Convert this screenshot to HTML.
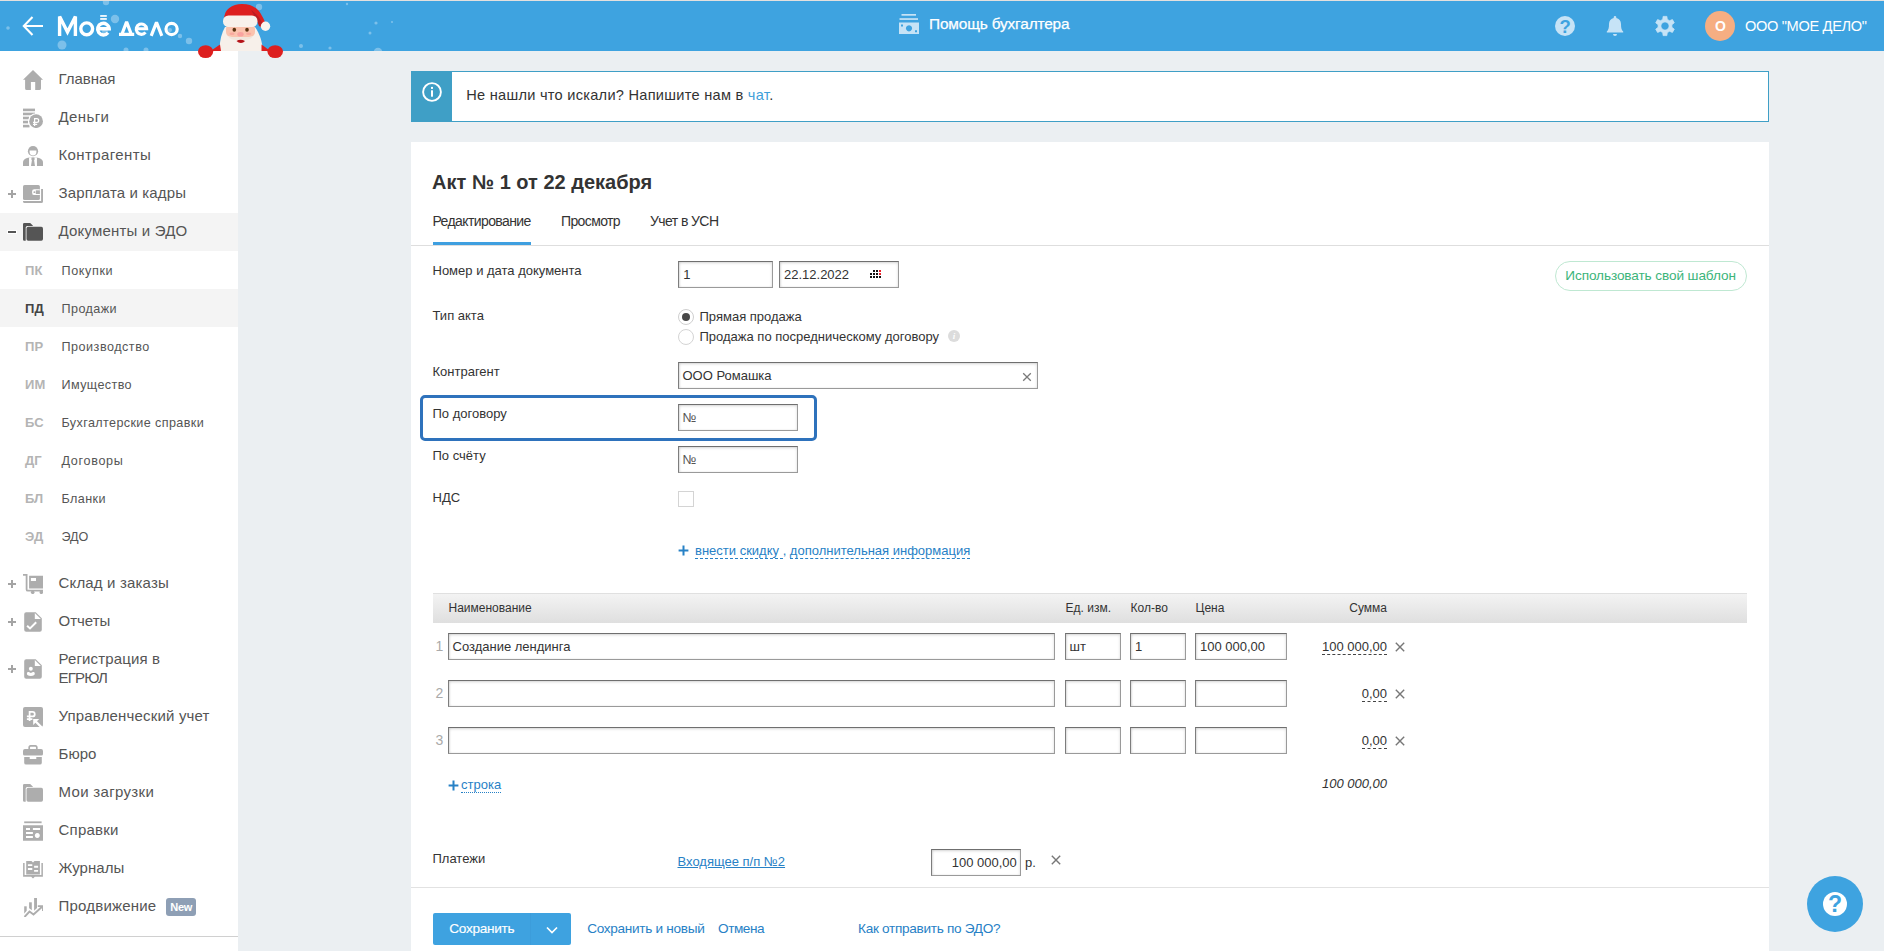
<!DOCTYPE html>
<html lang="ru">
<head>
<meta charset="utf-8">
<title>Акт № 1 от 22 декабря</title>
<style>
*{box-sizing:border-box;margin:0;padding:0}
html,body{width:1884px;height:951px;overflow:hidden}
body{position:relative;background:#ebeff2;font-family:"Liberation Sans",sans-serif;color:#333;font-size:13px}
.abs{position:absolute}
#hdr{z-index:5;position:absolute;left:0;top:0;width:1884px;height:51px;background:#3ea3e0;border-top:1px solid #e3e0de}
#hdr .t{position:absolute;color:#fff;font-size:15px;white-space:nowrap}
#side{position:absolute;left:0;top:0;width:238px;height:951px;background:#fff}
.tx{position:absolute;white-space:nowrap}
.band{position:absolute;left:0;width:238px;background:#f4f4f4}
.pm{position:absolute;left:7.9px;width:8.2px;height:8.2px}
.pm:before{content:"";position:absolute;left:0;top:3.3px;width:8.2px;height:1.6px;background:#a4a4a4}
.pm.minus:before{background:#555;height:2.2px;top:3px;box-shadow:0 0 0 1px #fff}
.pm.plus:after{content:"";position:absolute;left:3.3px;top:0;width:1.6px;height:8.2px;background:#a4a4a4}
.ic{position:absolute;left:23px}
#info{position:absolute;left:411px;top:71px;width:1358px;height:51px;background:#fff;border:1px solid #3f9fc6}
#info .ib{position:absolute;left:-1px;top:-1px;width:41px;height:51px;background:#3f9fc6}
#card{position:absolute;left:411px;top:142px;width:1358px;height:809px;background:#fff}
.inp{position:absolute;height:27px;background:#fff;border:1px solid #9a9a9a;border-top-color:#6f6f6f;border-left-color:#7d7d7d;box-shadow:inset 0 1px 3px rgba(0,0,0,.16),inset 1px 0 2px rgba(0,0,0,.07)}
.lnk{color:#2b7fc3}
</style>
</head>
<body>
<div id="side">
<div class="band" style="top:213px;height:38px"></div>
<div class="band" style="top:289px;height:38px"></div>
<svg class="ic" style="top:70px" width="20" height="20" viewBox="0 0 20 20" fill="#adadad"><path d="M10 0 L20 9.7 H18 V18.4 a1.6 1.6 0 0 1 -1.6 1.6 H12.2 V12 H7.9 V20 H3.7 a1.6 1.6 0 0 1 -1.6 -1.6 V9.7 H0 Z"/></svg>
<svg class="ic" style="top:107.5px" width="20" height="20" viewBox="0 0 20 20" fill="#adadad"><rect x="0" y="0.6" width="12" height="2.6"/><rect x="0" y="4.65" width="12" height="2.6"/><rect x="0" y="8.7" width="6" height="2.6"/><rect x="0" y="12.75" width="5" height="2.6"/><rect x="0" y="16.8" width="6.5" height="2.6"/>
<circle cx="13.1" cy="13.2" r="8" fill="#fff"/><circle cx="13.1" cy="13.2" r="6.85"/>
<path d="M11.6 18 V10.6 H13.8 a1.9 1.9 0 0 1 0 3.8 H10 M10 16.4 H14.2" fill="none" stroke="#fff" stroke-width="1.25"/></svg>
<svg class="ic" style="top:146px" width="20" height="20" viewBox="0 0 20 20" fill="#adadad"><circle cx="10" cy="5.2" r="5.1"/><path d="M6.6 4.6 H13.4 V6 a3.4 3.4 0 0 1 -6.8 0 Z" fill="#fff"/>
<path d="M0 20 V16.5 C0 13.5 3 12 6.5 11.5 H13.5 C17 12 20 13.5 20 16.5 V20 Z"/>
<path d="M6.2 11.4 L6.2 20 H13.8 V11.4 Z" fill="#fff"/>
<path d="M7.6 12.6 V20 H6.200 V12 Z M12.400 12.600 V20 H13.800 V12 Z" fill="#fff"/>
<path d="M7.700 13.500 V20 H6.100 Z" fill="none"/>
<path d="M8.600 11.500 H11.400 L11.700 13.300 L11.100 14.300 L12 20 H8 L8.900 14.300 L8.300 13.300 Z"/>
<path d="M0 20 V16.500 C0 13.500 3 12 6.200 11.400 V20 Z M20 20 V16.500 C20 13.500 17 12 13.800 11.400 V20 Z" fill="none"/></svg>
<svg class="ic" style="top:184px" width="20" height="20" viewBox="0 0 20 20" fill="#adadad"><rect x="0" y="1" width="16.900" height="15" rx="1.600"/>
<rect x="9.100" y="5.200" width="9" height="5.900" rx="2.200" fill="#fff"/>
<rect x="12.800" y="6.300" width="4.100" height="3.700"/>
<circle cx="11.400" cy="8.150" r="0.950"/>
<path d="M18.100 5 H20 V17.400 a1.600 1.600 0 0 1 -1.600 1.600 H1.600 a1.600 1.600 0 0 1 -1.600 -1.600 V16.900 H18.100 Z"/></svg>
<svg class="ic" style="top:222px" width="20" height="20" viewBox="0 0 20 20" fill="#555"><path d="M0 2.200 a1.200 1.200 0 0 1 1.200 -1.200 H7.200 L9.800 3.600 V3.900 H4.300 a1.600 1.600 0 0 0 -1.600 1.600 V18.800 H1.200 a1.200 1.200 0 0 1 -1.200 -1.200 Z"/>
<rect x="3.500" y="4.700" width="16.500" height="14.100" rx="1.700"/></svg>
<svg class="ic" style="top:574px" width="20" height="20" viewBox="0 0 20 20" fill="#adadad"><path d="M0 0.900 H3.600 V15.400 a1.300 1.300 0 0 0 1.300 1.300 H20" fill="none" stroke="#adadad" stroke-width="1.800"/><path d="M6.100 1.800 H20 V14.500 H6.100 Z M7.900 3.900 V7 H13 V3.900 Z" fill-rule="evenodd"/>
<circle cx="9.700" cy="18.300" r="1.800"/><circle cx="18.300" cy="18.300" r="1.800"/></svg>
<svg class="ic" style="top:612px" width="20" height="20" viewBox="0 0 20 20" fill="#adadad"><path d="M1.200 2.200 a2 2 0 0 1 2 -2 H12.700 L18.800 6.300 V17.800 a2 2 0 0 1 -2 2 H3.200 a2 2 0 0 1 -2 -2 Z"/><path d="M11.800 1.100 V7.100 H17.900 Z" fill="#fff"/><path d="M4.100 13.700 L7 16.400 L13.200 10.200" fill="none" stroke="#fff" stroke-width="2"/></svg>
<svg class="ic" style="top:659px" width="20" height="20" viewBox="0 0 20 20" fill="#adadad"><path d="M1.200 2.200 a2 2 0 0 1 2 -2 H12.700 L18.800 6.300 V17.800 a2 2 0 0 1 -2 2 H3.200 a2 2 0 0 1 -2 -2 Z"/><path d="M11.800 1.100 V7.100 H17.900 Z" fill="#fff"/><circle cx="7.850" cy="9.800" r="1.950" fill="#fff"/><path d="M3.900 14.300 C4.200 13 5.200 12.600 5.800 13.100 C7 14.200 8.700 14.200 9.900 13.100 C10.500 12.600 11.500 13 11.800 14.300 C12 16.200 10.500 17 7.850 17 C5.200 17 3.700 16.200 3.900 14.300 Z" fill="#fff"/></svg>
<svg class="ic" style="top:707px" width="20" height="20" viewBox="0 0 20 20" fill="#adadad"><rect x="0" y="0" width="20" height="20" rx="2"/>
<path d="M6.600 13.900 V4.850 H9.450 a2.300 2.300 0 0 1 0 4.600 H3.900 M3.900 12.200 H9.400" fill="none" stroke="#fff" stroke-width="1.750"/>
<path d="M10.200 12 H16.200 L10.200 18 Z" fill="#fff"/><path d="M12.500 14.300 L21 22.800" stroke="#fff" stroke-width="2.300"/></svg>
<svg class="ic" style="top:745px" width="20" height="20" viewBox="0 0 20 20" fill="#adadad"><path d="M6.200 4.300 V2.200 a1.300 1.300 0 0 1 1.300 -1.300 H12.500 a1.300 1.300 0 0 1 1.300 1.300 V4.300" fill="none" stroke="#adadad" stroke-width="1.700"/>
<path d="M0 6 a1.900 1.900 0 0 1 1.900 -1.900 H18.100 a1.900 1.900 0 0 1 1.900 1.900 V9 a1.500 1.500 0 0 1 -1.500 1.500 H1.500 a1.500 1.500 0 0 1 -1.500 -1.500 Z"/>
<path d="M1.200 11.900 H6.700 V14.100 H13.300 V11.900 H18.800 V17.700 a1.900 1.900 0 0 1 -1.900 1.900 H3.100 a1.900 1.900 0 0 1 -1.900 -1.900 Z"/></svg>
<svg class="ic" style="top:783px" width="20" height="20" viewBox="0 0 20 20" fill="#adadad"><path d="M0 2.200 a1.200 1.200 0 0 1 1.200 -1.200 H7.200 L9.800 3.600 V3.900 H4.300 a1.600 1.600 0 0 0 -1.600 1.600 V18.800 H1.200 a1.200 1.200 0 0 1 -1.200 -1.200 Z"/>
<rect x="3.500" y="4.700" width="16.500" height="14.100" rx="1.700"/></svg>
<svg class="ic" style="top:821px" width="20" height="20" viewBox="0 0 20 20" fill="#adadad"><rect x="1.200" y="0.400" width="17.400" height="1.800"/><path d="M0 4.200 H20 V19.700 H0 Z M3 7 V9 H7 V7 Z M9.900 7 V9 H17.100 V7 Z M3 11.100 V13.100 H9.900 V11.100 Z M3 15 V16.900 H9.900 V15 Z M14.300 12.100 a2.500 2.500 0 1 0 0.010 0 Z" fill-rule="evenodd"/></svg>
<svg class="ic" style="top:859px" width="20" height="20" viewBox="0 0 20 20" fill="#adadad"><path d="M0.100 4 H1.600 V16.100 H18.400 V4 H19.900 V17.800 H11.800 L10 19.600 L8.200 17.800 H0.100 Z"/>
<path d="M3.200 2 H8.500 L10 3.400 L11.500 2 H16.900 V15.500 H3.200 Z"/>
<path d="M4.900 6.100 H9.300 M4.900 9.950 H9.300 M11.100 7.750 H15.100 M11.100 11.900 H15.100" stroke="#fff" stroke-width="1.900"/></svg>
<svg class="ic" style="top:897px" width="20" height="20" viewBox="0 0 20 20" fill="#adadad"><rect x="1.200" y="9.300" width="2.500" height="8"/><rect x="6.100" y="5.300" width="2.700" height="9"/><rect x="11.100" y="1" width="2.900" height="13"/>
<path d="M-1 22.500 L6.500 14.600 L10.500 17.500 L18.800 10" fill="none" stroke="#fff" stroke-width="5"/>
<path d="M1.500 20 L6.500 14.600 L10.500 17.500 L18.800 10" fill="none" stroke="#adadad" stroke-width="1.900"/><path d="M14.800 9.100 H20 V14" fill="none" stroke="#adadad" stroke-width="1.900"/></svg>
<div class="tx" id="t1" style="top:70.00px;font-size:15px;line-height:18px;left:58.5px;color:#555;letter-spacing:-0.049px;">Главная</div>
<div class="tx" id="t2" style="top:108.00px;font-size:15px;line-height:18px;left:58.5px;color:#555;letter-spacing:0.409px;">Деньги</div>
<div class="tx" id="t3" style="top:146.00px;font-size:15px;line-height:18px;left:58.5px;color:#555;letter-spacing:0.386px;">Контрагенты</div>
<div class="tx" id="t4" style="top:184.00px;font-size:15px;line-height:18px;left:58.5px;color:#555;letter-spacing:0.132px;">Зарплата и кадры</div>
<div class="tx" id="t5" style="top:222.00px;font-size:15px;line-height:18px;left:58.5px;color:#555;letter-spacing:0.182px;">Документы и ЭДО</div>
<div class="tx" id="t6" style="top:574.00px;font-size:15px;line-height:18px;left:58.5px;color:#555;letter-spacing:0.171px;">Склад и заказы</div>
<div class="tx" id="t7" style="top:612.00px;font-size:15px;line-height:18px;left:58.5px;color:#555;letter-spacing:-0.012px;">Отчеты</div>
<div class="tx" id="t8" style="top:650.00px;font-size:15px;line-height:18px;left:58.5px;color:#555;letter-spacing:0.139px;">Регистрация в</div>
<div class="tx" id="t9" style="top:668.80px;font-size:15px;line-height:18px;left:58.5px;color:#555;letter-spacing:-0.792px;">ЕГРЮЛ</div>
<div class="tx" id="t10" style="top:707.00px;font-size:15px;line-height:18px;left:58.5px;color:#555;letter-spacing:0.175px;">Управленческий учет</div>
<div class="tx" id="t11" style="top:745.00px;font-size:15px;line-height:18px;left:58.5px;color:#555;letter-spacing:0.040px;">Бюро</div>
<div class="tx" id="t12" style="top:783.00px;font-size:15px;line-height:18px;left:58.5px;color:#555;letter-spacing:0.323px;">Мои загрузки</div>
<div class="tx" id="t13" style="top:821.00px;font-size:15px;line-height:18px;left:58.5px;color:#555;letter-spacing:0.240px;">Справки</div>
<div class="tx" id="t14" style="top:859.00px;font-size:15px;line-height:18px;left:58.5px;color:#555;letter-spacing:0.031px;">Журналы</div>
<div class="tx" id="t15" style="top:897.00px;font-size:15px;line-height:18px;left:58.5px;color:#555;letter-spacing:0.207px;">Продвижение</div>
<div class="tx" id="t16" style="top:262.50px;font-size:13px;line-height:16px;left:25.1px;color:#b4b4b4;font-weight:bold;">ПК</div>
<div class="tx" id="t17" style="top:262.63px;font-size:12.6px;line-height:16px;left:61.5px;color:#555;letter-spacing:0.621px;">Покупки</div>
<div class="tx" id="t18" style="top:300.50px;font-size:13px;line-height:16px;left:25.1px;color:#444;font-weight:bold;">ПД</div>
<div class="tx" id="t19" style="top:300.63px;font-size:12.6px;line-height:16px;left:61.5px;color:#555;letter-spacing:0.415px;">Продажи</div>
<div class="tx" id="t20" style="top:338.50px;font-size:13px;line-height:16px;left:25.1px;color:#b4b4b4;font-weight:bold;">ПР</div>
<div class="tx" id="t21" style="top:338.63px;font-size:12.6px;line-height:16px;left:61.5px;color:#555;letter-spacing:0.507px;">Производство</div>
<div class="tx" id="t22" style="top:376.50px;font-size:13px;line-height:16px;left:25.1px;color:#b4b4b4;font-weight:bold;">ИМ</div>
<div class="tx" id="t23" style="top:376.63px;font-size:12.6px;line-height:16px;left:61.5px;color:#555;letter-spacing:0.388px;">Имущество</div>
<div class="tx" id="t24" style="top:414.50px;font-size:13px;line-height:16px;left:25.1px;color:#b4b4b4;font-weight:bold;">БС</div>
<div class="tx" id="t25" style="top:414.63px;font-size:12.6px;line-height:16px;left:61.5px;color:#555;letter-spacing:0.380px;">Бухгалтерские справки</div>
<div class="tx" id="t26" style="top:452.50px;font-size:13px;line-height:16px;left:25.1px;color:#b4b4b4;font-weight:bold;">ДГ</div>
<div class="tx" id="t27" style="top:452.63px;font-size:12.6px;line-height:16px;left:61.5px;color:#555;letter-spacing:0.670px;">Договоры</div>
<div class="tx" id="t28" style="top:490.50px;font-size:13px;line-height:16px;left:25.1px;color:#b4b4b4;font-weight:bold;">БЛ</div>
<div class="tx" id="t29" style="top:490.63px;font-size:12.6px;line-height:16px;left:61.5px;color:#555;letter-spacing:0.403px;">Бланки</div>
<div class="tx" id="t30" style="top:528.50px;font-size:13px;line-height:16px;left:25.1px;color:#b4b4b4;font-weight:bold;">ЭД</div>
<div class="tx" id="t31" style="top:528.63px;font-size:12.6px;line-height:16px;left:61.5px;color:#555;letter-spacing:-0.134px;">ЭДО</div>
<div class="pm plus" style="top:189.9px"></div>
<div class="pm plus" style="top:579.9px"></div>
<div class="pm plus" style="top:617.9px"></div>
<div class="pm plus" style="top:664.9px"></div>
<div class="pm minus" style="top:227.9px"></div>
<div class="abs" style="left:166px;top:898px;width:30px;height:18px;border-radius:3px;background:#8e9fb5"></div>
<div class="tx" id="t32" style="top:900.49px;font-size:11px;line-height:14px;left:170.3px;color:#fff;font-weight:bold;letter-spacing:-0.363px;">New</div>
<div class="abs" style="left:0;top:936px;width:238px;height:1px;background:#d0d0d0"></div>
</div>
<div id="hdr">
<svg class="abs" style="left:0;top:-1px;overflow:visible" width="1884" height="62" viewBox="0 0 1884 62">
<defs><clipPath id="hc"><rect x="0" y="1" width="1884" height="50"/></clipPath></defs>
<g fill="#fff" fill-opacity=".32" clip-path="url(#hc)">
<circle cx="115" cy="19" r="4.2"/><circle cx="62" cy="45" r="4.5"/><circle cx="189" cy="41" r="3.2"/><circle cx="180" cy="36" r="2.2"/>
<circle cx="106" cy="2" r="3.2"/><circle cx="259" cy="7" r="3.2"/><circle cx="301" cy="46" r="2"/><circle cx="330" cy="48" r="1.6"/>
<circle cx="370" cy="33" r="1.5"/><circle cx="376" cy="23" r="1.6"/><circle cx="392" cy="22" r="1.1"/><circle cx="378" cy="52" r="4.300"/>
<circle cx="8" cy="28" r="1.8"/><circle cx="347" cy="4" r="1.2"/><circle cx="170" cy="30" r="2"/><circle cx="105" cy="32" r="3"/><circle cx="126" cy="50" r="2.5"/><circle cx="146" cy="50" r="2.5"/>
</g>
<!-- back arrow -->
<g fill="none" stroke="#fff" stroke-width="2.1" stroke-linecap="butt" stroke-linejoin="miter">
<path d="M24 26 H43 M32.5 17 L23.8 26 L32.5 35"/>
</g>
<!-- logo -->
<g fill="none" stroke="#fff" stroke-width="3.4" stroke-linejoin="miter">
<path d="M59.600 36 V16.500 L67.500 32 L75.400 16.500 V36"/>
<circle cx="86.700" cy="28.800" r="5.900"/>
<path d="M98 28.800 H109.200 A5.800 5.800 0 1 0 108 32.700"/>
<path d="M119 34.300 H134.200 M121.900 34.300 L126.600 21.900 L131.300 34.300" stroke-width="3.200" stroke-linejoin="bevel"/>
<path d="M137 28.700 H146.600 A5.200 5.200 0 1 0 145.500 32.400" stroke-width="3.100"/>
<path d="M151.200 35.900 L156.500 22.300 L161.800 35.900" stroke-width="3.200" stroke-linejoin="bevel"/>
<circle cx="171.600" cy="29" r="5.600" stroke-width="3.200"/>
</g>
<g fill="#fff"><rect x="100.200" y="15.100" width="6.600" height="1.700"/><rect x="100.200" y="18.100" width="6.600" height="1.700"/></g>
<!-- santa -->
<g>
<path d="M224 20 C224 9 232 4 242 4 C252 4 258 8 262 16 C265 21 266 25 266 27 L260 27 C258 22 256 19 254 17 Z" fill="#dd1f1f"/>
<path d="M251 10 C256 13 262 20 264 27 L259 26 C257 20 254 15 251 10 Z" fill="#b81c22"/>
<path d="M220 51 C219 44 221 34 225 27 L255 27 C260 34 263 44 262.500 51 Z" fill="#f7f0ea"/>
<rect x="226" y="24" width="29" height="13" rx="5" fill="#fbc3ae"/>
<rect x="223" y="15.5" width="34.5" height="11.5" rx="5.5" fill="#f8f1eb"/>
<circle cx="265.5" cy="26.3" r="4.7" fill="#faf3ec"/>
<ellipse cx="234.3" cy="29.8" rx="1.8" ry="2" fill="#5a3210"/><ellipse cx="247" cy="29.8" rx="1.8" ry="2" fill="#5a3210"/>
<ellipse cx="240.5" cy="34.3" rx="3.2" ry="2.3" fill="#f9a3a0"/>
<ellipse cx="232" cy="33.8" rx="2.6" ry="1.3" fill="#f9aa9e"/><ellipse cx="248.7" cy="33.8" rx="2.6" ry="1.3" fill="#f9aa9e"/>
<path d="M228 36 C233 38 238 36 240.5 37.5 C243 36 248 38 253 36 C250 41 244 40 240.5 39.5 C237 40 231 41 228 36 Z" fill="#f1e6dc"/>
<path d="M236.5 41 C239 39.3 242 39.3 245 41 C243 43.6 239 43.6 236.5 41 Z" fill="#b51217"/>
<path d="M212 50 L220 44.500 L221 51 L212 51 Z" fill="#dd1f1f"/><path d="M261.500 44.500 L269 50 L269 51 L261.500 51 Z" fill="#dd1f1f"/>
<ellipse cx="205.6" cy="51.6" rx="7.6" ry="6.4" fill="#dd1f1f"/>
<ellipse cx="275.2" cy="51.6" rx="7.8" ry="6.4" fill="#dd1f1f"/>
</g>
<!-- center icon -->
<g fill="#c6e3f6">
<rect x="901.5" y="14" width="14.5" height="1.7"/><rect x="899.5" y="18.2" width="18.5" height="1.7"/>
<path d="M899 22.5 H919 V34 H899 Z M909 25.2 a3.1 3.1 0 1 0 0.01 0 Z M901 24.5 v2 h2 v-2 Z M915 30.2 v2 h2 v-2 Z" fill-rule="evenodd"/>
</g>
<!-- right icons -->
<g fill="#c6e3f6">
<circle cx="1565" cy="26" r="10"/>
<path d="M1606.800 31.500 C1608.600 30 1609 27.500 1609 24 C1609 20.500 1611 18.600 1613.700 18 V17.300 a1.300 1.300 0 0 1 2.600 0 V18 C1619 18.600 1621 20.500 1621 24 C1621 27.500 1621.400 30 1623.200 31.500 V32.500 H1606.800 Z M1613 34 H1617 A2 2 0 0 1 1613 34 Z"/>
</g>
<g transform="translate(1665,26)" fill="#c6e3f6">
<path fill-rule="evenodd" stroke="#c6e3f6" stroke-width="0.8" stroke-linejoin="round" d="M2.28 -6.62 L1.87 -9.62 L-1.87 -9.62 L-2.28 -6.62 L-4.59 -5.28 L-7.40 -6.43 L-9.27 -3.19 L-6.87 -1.34 L-6.87 1.34 L-9.27 3.19 L-7.40 6.43 L-4.59 5.28 L-2.28 6.62 L-1.87 9.62 L1.87 9.62 L2.28 6.62 L4.59 5.28 L7.40 6.43 L9.27 3.19 L6.87 1.34 L6.87 -1.34 L9.27 -3.19 L7.40 -6.43 L4.59 -5.28 Z M0 -4.1 A4.1 4.1 0 1 0 0.01 -4.1 Z"/>
</g>
<circle cx="1720" cy="26" r="15" fill="#f6ae82"/>
</svg>
</div>
<div class="abs" style="left:0;top:0;z-index:6">
<div class="tx" id="t33" style="top:14.86px;font-size:15.4px;line-height:18px;left:929px;color:#fff;-webkit-text-stroke:0.25px #fff;letter-spacing:-0.148px;">Помощь бухгалтера</div>
<div class="tx" id="t34" style="top:16.54px;font-size:14.6px;line-height:18px;left:1745px;color:#fff;letter-spacing:-0.333px;">ООО "МОЕ ДЕЛО"</div>
<div class="tx" id="t35" style="top:16.75px;font-size:14px;line-height:18px;left:1715px;color:#fff;font-weight:bold;">О</div>
<div class="tx" id="t36" style="top:16.59px;font-size:18.5px;line-height:20px;left:1559.4px;color:#3ea3e0;font-weight:bold;">?</div>
</div>
<div id="info"><div class="ib"></div></div>
<svg class="abs" style="left:420.5px;top:81px" width="22" height="22" viewBox="0 0 22 22"><circle cx="11" cy="11" r="8.900" fill="none" stroke="#fff" stroke-width="1.900"/><rect x="10" y="9.300" width="2" height="6.400" fill="#fff"/><rect x="10" y="5.900" width="2" height="2" fill="#fff"/></svg>
<div class="tx" id="t37" style="top:85.94px;font-size:14.6px;line-height:18px;left:466.2px;color:#333;letter-spacing:0.267px;">Не нашли что искали? Напишите нам в <span style="color:#3f9fd9">чат</span>.</div>
<div id="card"></div>
<div class="tx" id="t38" style="top:170.07px;font-size:20px;line-height:24px;left:432px;color:#333;font-weight:bold;">Акт № 1 от 22 декабря</div>
<div class="tx" id="t39" style="top:212.85px;font-size:14px;line-height:17px;left:432.5px;color:#333;letter-spacing:-0.604px;">Редактирование</div>
<div class="tx" id="t40" style="top:212.85px;font-size:14px;line-height:17px;left:561px;color:#333;letter-spacing:-0.620px;">Просмотр</div>
<div class="tx" id="t41" style="top:212.85px;font-size:14px;line-height:17px;left:650px;color:#333;letter-spacing:-0.585px;">Учет в УСН</div>
<div class="abs" style="left:411px;top:245px;width:1358px;height:1px;background:#dedede"></div>
<div class="abs" style="left:433px;top:242px;width:98px;height:3px;background:#3e9fe0"></div>
<div class="abs" style="left:1555px;top:261px;width:192px;height:30px;border:1px solid #bfe8d2;border-radius:15px;background:#fff"></div>
<div class="tx" id="t42" style="top:266.79px;font-size:13.6px;line-height:17px;left:1565.3px;color:#3cb47a;letter-spacing:-0.098px;">Использовать свой шаблон</div>
<div class="tx" id="t43" style="top:263.30px;font-size:13px;line-height:15px;left:432.5px;color:#333;">Номер и дата документа</div>
<div class="tx" id="t44" style="top:308.30px;font-size:13px;line-height:15px;left:432.5px;color:#333;">Тип акта</div>
<div class="tx" id="t45" style="top:364.20px;font-size:13px;line-height:15px;left:432.5px;color:#333;">Контрагент</div>
<div class="tx" id="t46" style="top:406.00px;font-size:13px;line-height:15px;left:432.5px;color:#333;">По договору</div>
<div class="tx" id="t47" style="top:448.20px;font-size:13px;line-height:15px;left:432.5px;color:#333;">По счёту</div>
<div class="tx" id="t48" style="top:490.00px;font-size:13px;line-height:15px;left:432.5px;color:#333;">НДС</div>
<div class="inp" style="left:678px;top:261px;width:95px;height:27px;"></div>
<div class="tx" id="t49" style="top:266.70px;font-size:13px;line-height:15px;left:683.2px;">1</div>
<div class="inp" style="left:779px;top:261px;width:120px;height:27px;"></div>
<div class="tx" id="t50" style="top:266.70px;font-size:13px;line-height:15px;left:784px;">22.12.2022</div>
<svg class="abs" style="left:870px;top:270px" width="13" height="10" viewBox="0 0 13 10" shape-rendering="crispEdges"><rect x="3" y="0" width="2" height="2" fill="#111"/><rect x="6" y="0" width="2" height="2" fill="#111"/><rect x="9" y="0" width="2" height="2" fill="#e8202a"/><rect x="0" y="3" width="2" height="2" fill="#111"/><rect x="3" y="3" width="2" height="2" fill="#111"/><rect x="6" y="3" width="2" height="2" fill="#111"/><rect x="9" y="3" width="2" height="2" fill="#e8202a"/><rect x="0" y="6" width="2" height="2" fill="#111"/><rect x="3" y="6" width="2" height="2" fill="#111"/><rect x="6" y="6" width="2" height="2" fill="#111"/><rect x="9" y="6" width="2" height="2" fill="#111"/></svg>
<div class="abs" style="left:678px;top:309px;width:16px;height:16px;border-radius:50%;border:1px solid #cfcfcf;background:#fff"></div><div class="abs" style="left:682px;top:313px;width:8px;height:8px;border-radius:50%;background:#484848"></div>
<div class="abs" style="left:678px;top:329px;width:16px;height:16px;border-radius:50%;border:1px solid #d4d4d4;background:#fff"></div>
<div class="tx" id="t51" style="top:308.70px;font-size:13px;line-height:15px;left:699.5px;">Прямая продажа</div>
<div class="tx" id="t52" style="top:328.80px;font-size:13px;line-height:15px;left:699.5px;">Продажа по посредническому договору</div>
<div class="abs" style="left:948px;top:330px;width:12px;height:12px;border-radius:50%;background:#dcdcdc;color:#fff;font:italic bold 9px/12px 'Liberation Serif',serif;text-align:center">i</div>
<div class="inp" style="left:678px;top:362px;width:360px;height:27px;"></div>
<div class="tx" id="t53" style="top:367.70px;font-size:13px;line-height:15px;left:682.5px;">ООО Ромашка</div>
<svg class="abs" style="left:1020.5px;top:370.5px" width="12" height="12" viewBox="-6 -6 12 12"><path d="M-3.8 -3.8 L3.8 3.8 M3.8 -3.8 L-3.8 3.8" stroke="#7a7a7a" stroke-width="1.3" fill="none"/></svg>
<div class="abs" style="left:420px;top:395px;width:397px;height:46px;border:3px solid #2e72bc;border-radius:5px"></div>
<div class="inp" style="left:678px;top:404px;width:120px;height:27px;"></div>
<div class="tx" id="t54" style="top:410.20px;font-size:13px;line-height:15px;left:682.5px;color:#555;">№</div>
<div class="inp" style="left:678px;top:446px;width:120px;height:27px;"></div>
<div class="tx" id="t55" style="top:452.20px;font-size:13px;line-height:15px;left:682.5px;color:#555;">№</div>
<div class="abs" style="left:678px;top:491px;width:16px;height:16px;border:1px solid #d4d4d4;background:#fff"></div>
<svg class="abs" style="left:678px;top:545px" width="11" height="11" viewBox="0 0 11 11"><path d="M5.5 0.600 V10.400 M0.600 5.500 H10.400" stroke="#2781c6" stroke-width="2"/></svg>
<div class="tx" id="t56" style="top:542.60px;font-size:13px;line-height:15px;left:695px;color:#2781c6;"><span style="border-bottom:1px dashed #2781c6">внести скидку </span>, <span style="border-bottom:1px dashed #2781c6">дополнительная информация</span></div>
<div class="abs" style="left:433px;top:593px;width:1314px;height:30px;background:linear-gradient(#f3f3f3,#dfdfdf);border-top:1px solid #e0e0e0"></div>
<div class="tx" id="t57" style="top:601.04px;font-size:12px;line-height:14px;left:448.5px;color:#333;">Наименование</div>
<div class="tx" id="t58" style="top:601.04px;font-size:12px;line-height:14px;left:1065.5px;color:#333;">Ед. изм.</div>
<div class="tx" id="t59" style="top:601.04px;font-size:12px;line-height:14px;left:1130.5px;color:#333;">Кол-во</div>
<div class="tx" id="t60" style="top:601.04px;font-size:12px;line-height:14px;left:1195.5px;color:#333;">Цена</div>
<div class="tx" id="t61" style="top:601.04px;font-size:12px;line-height:14px;right:497px;color:#333;">Сумма</div>
<div class="tx" id="t62" style="top:637.75px;font-size:14px;line-height:16px;left:435.5px;color:#aaa;">1</div>
<div class="inp" style="left:448px;top:633px;width:607px;height:27px;"></div>
<div class="inp" style="left:1065px;top:633px;width:56px;height:27px;"></div>
<div class="inp" style="left:1130px;top:633px;width:56px;height:27px;"></div>
<div class="inp" style="left:1195px;top:633px;width:92px;height:27px;"></div>
<svg class="abs" style="left:1394px;top:640.6px" width="12" height="12" viewBox="-6 -6 12 12"><path d="M-4.2 -4.2 L4.2 4.2 M4.2 -4.2 L-4.2 4.2" stroke="#777" stroke-width="1.4" fill="none"/></svg>
<div class="tx" id="t63" style="top:638.60px;font-size:13px;line-height:15px;right:497px;color:#333;"><span style="border-bottom:1px dashed #444;padding-bottom:0px">100 000,00</span></div>
<div class="tx" id="t64" style="top:684.75px;font-size:14px;line-height:16px;left:435.5px;color:#aaa;">2</div>
<div class="inp" style="left:448px;top:680px;width:607px;height:27px;"></div>
<div class="inp" style="left:1065px;top:680px;width:56px;height:27px;"></div>
<div class="inp" style="left:1130px;top:680px;width:56px;height:27px;"></div>
<div class="inp" style="left:1195px;top:680px;width:92px;height:27px;"></div>
<svg class="abs" style="left:1394px;top:687.6px" width="12" height="12" viewBox="-6 -6 12 12"><path d="M-4.2 -4.2 L4.2 4.2 M4.2 -4.2 L-4.2 4.2" stroke="#777" stroke-width="1.4" fill="none"/></svg>
<div class="tx" id="t65" style="top:685.60px;font-size:13px;line-height:15px;right:497px;color:#333;"><span style="border-bottom:1px dashed #444;padding-bottom:0px">0,00</span></div>
<div class="tx" id="t66" style="top:731.75px;font-size:14px;line-height:16px;left:435.5px;color:#aaa;">3</div>
<div class="inp" style="left:448px;top:727px;width:607px;height:27px;"></div>
<div class="inp" style="left:1065px;top:727px;width:56px;height:27px;"></div>
<div class="inp" style="left:1130px;top:727px;width:56px;height:27px;"></div>
<div class="inp" style="left:1195px;top:727px;width:92px;height:27px;"></div>
<svg class="abs" style="left:1394px;top:734.6px" width="12" height="12" viewBox="-6 -6 12 12"><path d="M-4.2 -4.2 L4.2 4.2 M4.2 -4.2 L-4.2 4.2" stroke="#777" stroke-width="1.4" fill="none"/></svg>
<div class="tx" id="t67" style="top:732.60px;font-size:13px;line-height:15px;right:497px;color:#333;"><span style="border-bottom:1px dashed #444;padding-bottom:0px">0,00</span></div>
<div class="tx" id="t68" style="top:638.60px;font-size:13px;line-height:15px;left:452.5px;">Создание лендинга</div>
<div class="tx" id="t69" style="top:638.60px;font-size:13px;line-height:15px;left:1069.5px;">шт</div>
<div class="tx" id="t70" style="top:638.60px;font-size:13px;line-height:15px;left:1135px;">1</div>
<div class="tx" id="t71" style="top:638.60px;font-size:13px;line-height:15px;left:1200px;">100 000,00</div>
<svg class="abs" style="left:448px;top:779.5px" width="11" height="11" viewBox="0 0 11 11"><path d="M5.5 0.600 V10.400 M0.600 5.500 H10.400" stroke="#2781c6" stroke-width="2"/></svg>
<div class="tx" id="t72" style="top:776.60px;font-size:13px;line-height:15px;left:461px;color:#2781c6;"><span style="border-bottom:1px dotted #2781c6">строка</span></div>
<div class="tx" id="t73" style="top:776.00px;font-size:13px;line-height:15px;right:497px;color:#333;font-style:italic;">100 000,00</div>
<div class="tx" id="t74" style="top:850.70px;font-size:13px;line-height:15px;left:432.5px;">Платежи</div>
<div class="tx" id="t75" style="top:854.00px;font-size:13px;line-height:15px;left:677.5px;color:#2781c6;text-decoration:underline;">Входящее п/п №2</div>
<div class="inp" style="left:931px;top:849px;width:90px;height:27px;"></div>
<div class="tx" id="t76" style="top:854.50px;font-size:13px;line-height:15px;right:867.2px;">100 000,00</div>
<div class="tx" id="t77" style="top:854.50px;font-size:13px;line-height:15px;left:1025px;">р.</div>
<svg class="abs" style="left:1049.8px;top:854.3px" width="12" height="12" viewBox="-6 -6 12 12"><path d="M-4.2 -4.2 L4.2 4.2 M4.2 -4.2 L-4.2 4.2" stroke="#777" stroke-width="1.4" fill="none"/></svg>
<div class="abs" style="left:411px;top:887px;width:1358px;height:1px;background:#e2e2e2"></div>
<div class="abs" style="left:433px;top:913px;width:138px;height:32px;background:#3ea2e0;border-radius:2px"></div><div class="abs" style="left:530px;top:913px;width:1px;height:32px;background:#3c9ddb"></div>
<svg class="abs" style="left:545.6px;top:925.8px" width="12" height="9" viewBox="0 0 12 9"><path d="M1 1.500 L6 6.600 L11 1.500" fill="none" stroke="#fff" stroke-width="1.700"/></svg>
<div class="tx" id="t78" style="top:921.29px;font-size:13.6px;line-height:16px;left:449.3px;color:#fff;-webkit-text-stroke:0.15px #fff;letter-spacing:-0.295px;">Сохранить</div>
<div class="tx" id="t79" style="top:920.99px;font-size:13.6px;line-height:16px;left:587.2px;color:#2781c6;letter-spacing:-0.297px;">Сохранить и новый</div>
<div class="tx" id="t80" style="top:920.99px;font-size:13.6px;line-height:16px;left:718px;color:#2781c6;letter-spacing:-0.436px;">Отмена</div>
<div class="tx" id="t81" style="top:920.99px;font-size:13.6px;line-height:16px;left:858px;color:#2781c6;letter-spacing:-0.292px;">Как отправить по ЭДО?</div>
<div class="abs" style="left:1807px;top:876px;width:56px;height:56px;border-radius:50%;background:#3ea3e0"></div><div class="abs" style="left:1823px;top:892px;width:24px;height:24px;border-radius:50%;background:#fff"></div>
<div class="tx" id="t82" style="top:891.43px;font-size:23px;line-height:26px;left:1828px;color:#3ea3e0;font-weight:bold;">?</div>
</body>
</html>
